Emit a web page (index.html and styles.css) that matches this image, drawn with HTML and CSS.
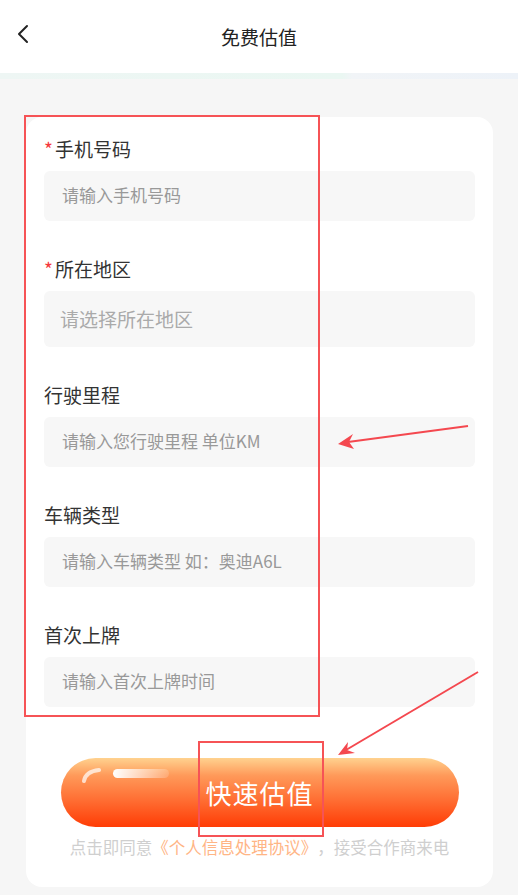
FILE: index.html
```html
<!DOCTYPE html>
<html lang="zh-CN">
<head>
  <meta charset="UTF-8" />
  <meta name="viewport" content="width=device-width, initial-scale=1.0" />
  <title>免费估值</title>
  <link rel="stylesheet" href="styles.css">
</head>
<body>
  <header class="nav-bar">
    <svg class="back-icon" width="12" height="20" viewBox="0 0 12 20">
      <path d="M10 2 L2 10 L10 18" fill="none" stroke="#222" stroke-width="2" stroke-linecap="round" stroke-linejoin="round" />
    </svg>
    <h1>免费估值</h1>
  </header>
  <div class="nav-shade"></div>

  <main>
    <div class="card">
      <div class="form-group">
        <label><span class="req">*</span>手机号码</label>
        <div class="field">请输入手机号码</div>
      </div>
      <div class="form-group">
        <label><span class="req">*</span>所在地区</label>
        <div class="field field-select">请选择所在地区</div>
      </div>
      <div class="form-group">
        <label>行驶里程</label>
        <div class="field">请输入您行驶里程 单位KM</div>
      </div>
      <div class="form-group">
        <label>车辆类型</label>
        <div class="field">请输入车辆类型 如：奥迪A6L</div>
      </div>
      <div class="form-group">
        <label>首次上牌</label>
        <div class="field">请输入首次上牌时间</div>
      </div>

      <button class="submit-btn" type="button">
        <svg class="shine" width="110" height="22" viewBox="0 0 110 22">
          <defs>
            <linearGradient id="shineGrad" x1="0" y1="0" x2="1" y2="0">
              <stop offset="0" stop-color="#fff" stop-opacity="1" />
              <stop offset="1" stop-color="#fff" stop-opacity="0.15" />
            </linearGradient>
          </defs>
          <path d="M23 20 C24 14 29 10 38 9" fill="none" stroke="#fff" stroke-opacity="0.7" stroke-width="4" stroke-linecap="round" />
          <rect x="52" y="8" width="56" height="9" rx="4.5" fill="url(#shineGrad)" />
        </svg>
        快速估值
      </button>
      <p class="agreement">点击即同意<span class="link">《个人信息处理协议》</span>，接受合作商来电</p>
    </div>
  </main>

  <!-- annotation marks -->
  <svg class="marks" width="518" height="895" viewBox="0 0 518 895">
    <rect x="25" y="116" width="294" height="600" fill="none" stroke="#f65356" stroke-width="2" />
    <rect x="199" y="742" width="124" height="94" fill="none" stroke="#f65356" stroke-width="2" />
    <line x1="468" y1="426" x2="348" y2="442" stroke="#f4484f" stroke-width="2" />
    <path d="M338 444 L353 434 L349 442 L354 449 Z" fill="#f4484f" />
    <line x1="478" y1="672" x2="346" y2="750" stroke="#f4484f" stroke-width="2" />
    <path d="M338 755 L348 742 L347 750 L355 753 Z" fill="#f4484f" />
  </svg>
</body>
</html>
```

FILE: styles.css
```css
* {
  box-sizing: border-box;
}
body {
  margin: 0;
  font-family: "Noto Sans CJK SC", "Noto Sans", sans-serif;
  background-color: #f6f6f6;
  position: relative;
}
.nav-bar {
  height: 73px;
  background-color: #fff;
  display: flex;
  align-items: center;
  justify-content: center;
  position: relative;
}
.back-icon {
  position: absolute;
  left: 17px;
  top: 24px;
}
.nav-bar h1 {
  margin: 0;
  font-size: 19px;
  font-weight: 400;
  color: #222;
}
.nav-shade {
  height: 6px;
  background: linear-gradient(90deg, #eef6f4 0%, #eaf7f2 66%, #f1f4f7 68%, #edf2f8 100%);
}
main {
  padding: 38px 25px 9px 26px;
}
.card {
  background-color: #fff;
  border-radius: 16px;
  padding: 20px 18px 28px;
}
.form-group {
  margin-bottom: 36px;
}
.form-group label {
  display: block;
  height: 26px;
  line-height: 23px;
  margin-bottom: 8px;
  font-size: 19px;
  color: #333;
}
.req {
  color: #f5393b;
  margin-right: 2px;
}
.field {
  height: 50px;
  line-height: 48px;
  padding-left: 18px;
  background-color: #f7f7f7;
  border-radius: 6px;
  font-size: 17px;
  color: #999;
}
.field-select {
  height: 56px;
  line-height: 56px;
  padding-left: 16px;
  font-size: 19px;
  color: #aaa;
}
.form-group:last-of-type {
  margin-bottom: 0;
}
.submit-btn {
  position: relative;
  display: block;
  width: 398px;
  height: 69px;
  margin: 51px auto 0;
  border: none;
  border-radius: 35px;
  background: linear-gradient(180deg, #ffd28f 0%, #ff9a5a 25%, #ff6f34 60%, #ff3c05 100%);
  color: #fff;
  font-family: inherit;
  font-size: 26px;
  letter-spacing: 1px;
  cursor: pointer;
}
.shine {
  position: absolute;
  left: 0;
  top: 3px;
}
.agreement {
  margin: 8px 0 0;
  text-align: center;
  font-size: 16.5px;
  line-height: 24px;
  color: #cfcfcf;
  white-space: nowrap;
  text-spacing-trim: space-all;
}
.agreement .link {
  color: #ffb585;
}
.marks {
  position: absolute;
  left: 0;
  top: 0;
  pointer-events: none;
}
```
